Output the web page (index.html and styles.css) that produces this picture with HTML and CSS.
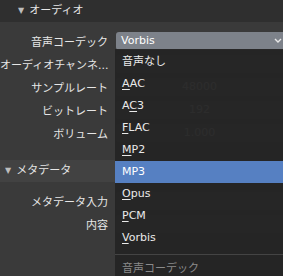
FILE: index.html
```html
<!DOCTYPE html>
<html lang="ja">
<head>
  <meta charset="UTF-8" />
  <title>オーディオ</title>
  <link rel="stylesheet" href="styles.css">
</head>
<body>
  <div class="panel">
    <div class="panel-head first"><span class="arrow">▼</span>オーディオ</div>
    <div class="rows">
      <div class="row"><div class="label">音声コーデック</div><div class="field select">Vorbis</div></div>
      <div class="row"><div class="label">オーディオチャンネ...</div><div class="field"></div></div>
      <div class="row"><div class="label">サンプルレート</div><div class="field">48000</div></div>
      <div class="row"><div class="label">ビットレート</div><div class="field">192</div></div>
      <div class="row"><div class="label">ボリューム</div><div class="field">1.000</div></div>
    </div>
    <div class="panel-head"><span class="arrow">▼</span>メタデータ</div>
    <div class="rows">
      <div class="row"><div class="label">メタデータ入力</div><div class="field"></div></div>
      <div class="row"><div class="label">内容</div><div class="field"></div></div>
    </div>
  </div>

  <!-- open codec menu -->
  <div class="menu">
    <div class="item">音声なし</div>
    <div class="item"><u>A</u>AC</div>
    <div class="item">A<u>C</u>3</div>
    <div class="item"><u>F</u>LAC</div>
    <div class="item"><u>M</u>P2</div>
    <div class="item active">MP3</div>
    <div class="item"><u>O</u>pus</div>
    <div class="item"><u>P</u>CM</div>
    <div class="item"><u>V</u>orbis</div>
    <div class="sep"></div>
    <div class="title">音声コーデック</div>
  </div>

  <svg class="chevron" width="10" height="8" viewBox="0 0 10 8">
    <path d="M2 2 L5 5 L8 2" fill="none" stroke="#e8e8e8" stroke-width="1.4"/>
  </svg>
</body>
</html>
```

FILE: styles.css
```css
body {
  margin: 0;
  width: 283px;
  height: 276px;
  overflow: hidden;
  background: #3a3a3a;
  font-family: "DejaVu Sans", "Noto Sans CJK JP", sans-serif;
  font-size: 11px;
  color: #e6e6e6;
  position: relative;
}
.panel-head {
  height: 22px;
  line-height: 22px;
  background: #424242;
  padding-left: 5px;
}
.panel-head.first {
  background: #2f2f2f;
  padding-left: 18px;
}
.arrow {
  font-size: 8px;
  color: #bdbdbd;
  margin-right: 5px;
  vertical-align: 1px;
}
.rows {
  padding: 7px 0 16px;
}
.row {
  display: flex;
  height: 23px;
  align-items: center;
}
.label {
  width: 116px;
  text-align: right;
  white-space: nowrap;
  padding-right: 8px;
  box-sizing: border-box;
}
.field {
  flex: 1;
  height: 18px;
  line-height: 18px;
  background: #545454;
  border-radius: 3px 0 0 3px;
  text-align: center;
  color: #e6e6e6;
}
.field.select {
  background: #7d828a;
  text-align: left;
  padding-left: 5px;
  color: #fff;
}
.menu {
  position: absolute;
  left: 115px;
  right: 0;
  top: 49px;
  bottom: 0;
  background: rgba(36, 36, 36, 0.96);
  padding-top: 2px;
}
.item {
  height: 22px;
  line-height: 22px;
  padding-left: 7px;
  color: #eaeaea;
}
.item u {
  text-decoration-thickness: 1px;
  text-underline-offset: 2px;
}
.item.active {
  background: #5680c2;
  color: #fff;
}
.sep {
  height: 1px;
  background: #444;
  margin: 5px 0 4px;
}
.title {
  height: 20px;
  line-height: 20px;
  padding-left: 7px;
  color: #8a8a8a;
}
.chevron {
  position: absolute;
  left: 273px;
  top: 37px;
}
```
